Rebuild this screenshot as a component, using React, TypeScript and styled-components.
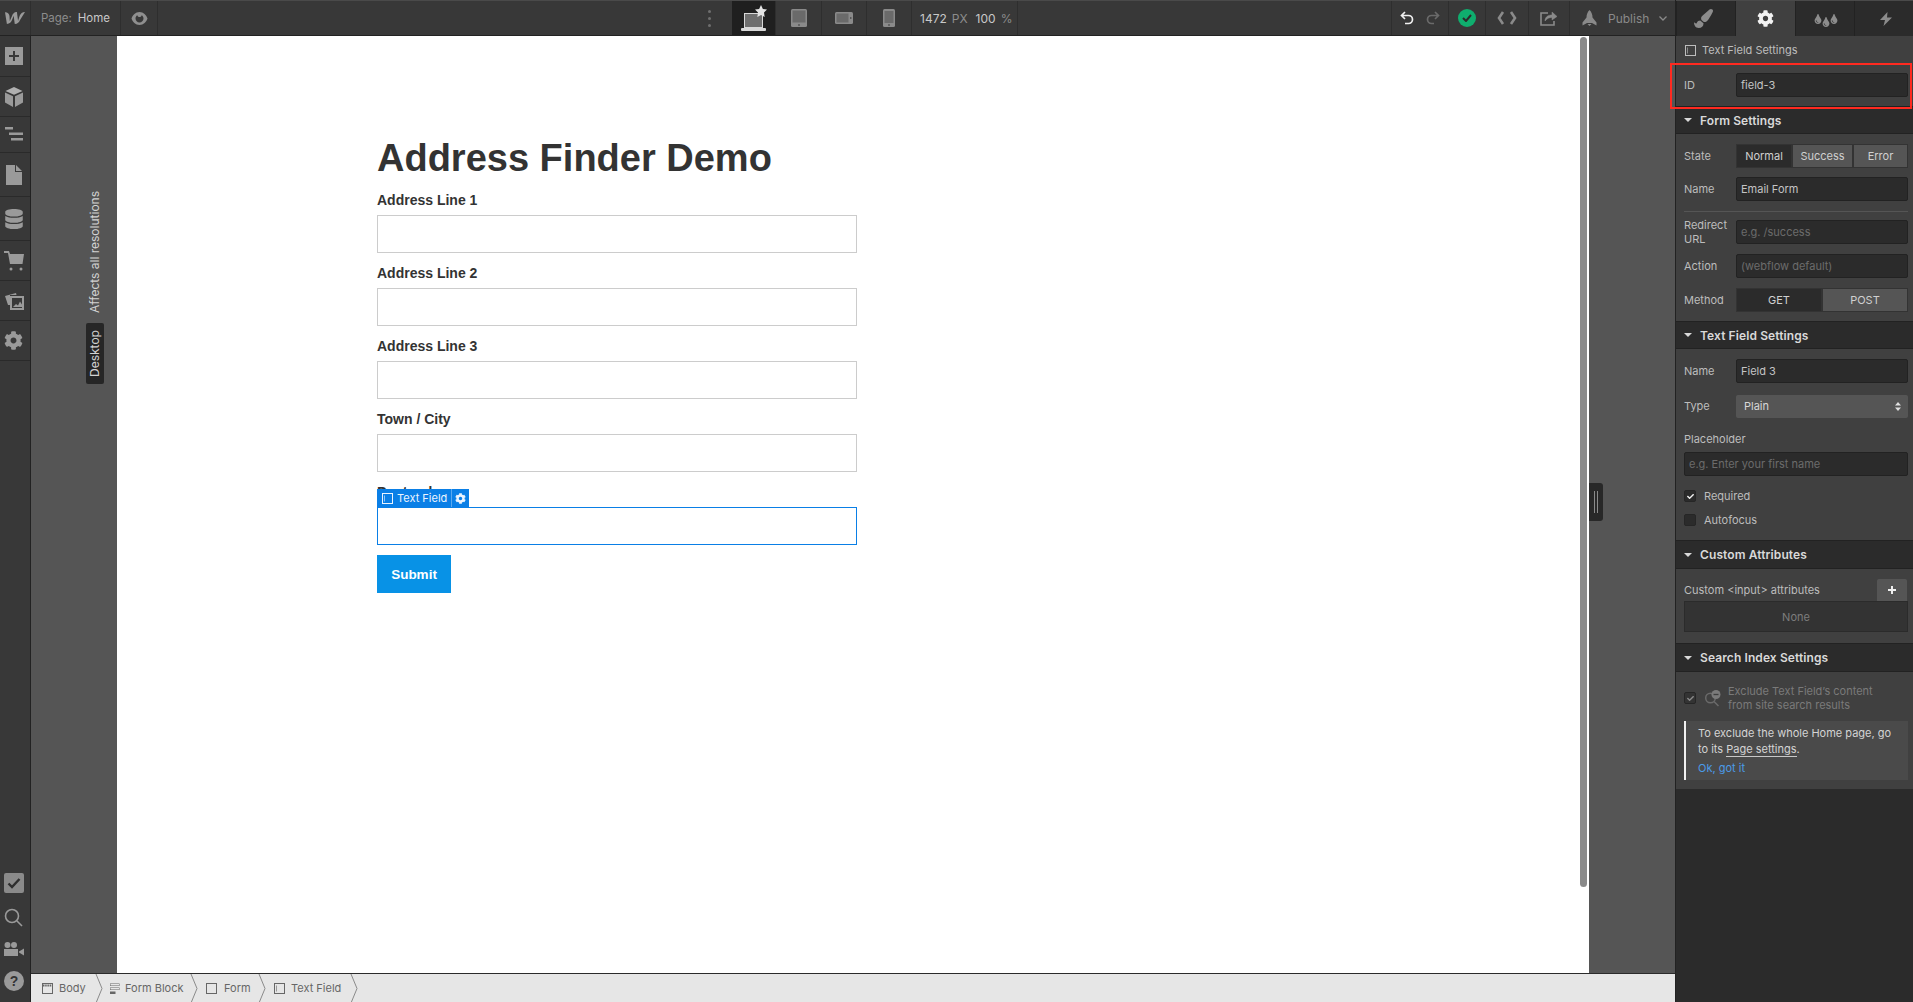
import React from 'react';
import styled, { createGlobalStyle } from 'styled-components';
import { FaCog, FaTint, FaPaintBrush, FaDatabase, FaCheck } from 'react-icons/fa';

const GlobalStyle = createGlobalStyle`
  html, body { margin: 0; padding: 0; height: 100%; overflow: hidden; background: #555; }
  * { box-sizing: border-box; }
  #root { height: 100%; }
`;

const FIELDS = ['Address Line 1', 'Address Line 2', 'Address Line 3', 'Town / City'];

const FieldBoxIcon = () => (
  <svg width="11" height="11" viewBox="0 0 11 11" fill="none" stroke="currentColor">
    <rect x="0.5" y="0.5" width="10" height="10" />
    <path d="M2.5 2.5v6" opacity="0.6" />
  </svg>
);

const BoxIcon = () => (
  <svg width="11" height="11" viewBox="0 0 11 11" fill="none" stroke="currentColor">
    <rect x="0.5" y="0.5" width="10" height="10" />
  </svg>
);

const BodyIcon = () => (
  <svg width="11" height="11" viewBox="0 0 11 11" fill="none" stroke="currentColor">
    <rect x="0.5" y="0.5" width="10" height="10" />
    <path d="M1 2.5h9" strokeWidth="2" strokeDasharray="1.5 0.7" />
  </svg>
);

const BlockIcon = () => (
  <svg width="11" height="11" viewBox="0 0 11 11" fill="currentColor">
    <path d="M1 .5h9.5v2.5H1zM1.5 1v1.5h8.5V1z" fillRule="evenodd" />
    <path d="M1 4.5h9.5V7H1zM1.5 5v1.5h8.5V5z" fillRule="evenodd" />
    <path d="M1 8.5h5.5V11H1z" />
  </svg>
);

const CrumbArrow = () => (
  <svg width="8" height="29" viewBox="0 0 8 29" fill="none" stroke="#8a8a8a">
    <path d="M1 0l6 14.5L1 29" />
  </svg>
);

export default function App() {
  return (
    <Page>
      <GlobalStyle />
      <Designer>
        <TopBar>
          <LogoCell>
            <svg width="20" height="13" viewBox="0 0 20 13" fill="#9a9a9a">
              <path d="M14.8 3.6s-1.6 5-1.7 5.3c0-.4-1.2-9-1.2-9C9.2-.1 7.8 1.8 7 3.9L4.800 9c0-.3-.3-5-.3-5C4.300 1.300 2 0 0 .2l1.900 11.800c2.800 0 4.300-1.900 5.100-3.900l1.700-4.300c0 .2 1.100 8.200 1.100 8.200 2.800 0 4.300-1.800 5.100-3.700L20 0c-2.800 0-4.300 1.600-5.200 3.600z" />
            </svg>
          </LogoCell>
          <PageCell>
            <Dim>Page:</Dim>
            <Bright>Home</Bright>
          </PageCell>
          <EyeCell>
            <svg width="17" height="15" viewBox="0 0 17 15" fill="#8f8f8f">
              <path d="M8.500 1C4.500 1 1.600 4 .5 7.500 1.600 11 4.500 14 8.500 14s6.900-3 8-6.500C15.400 4 12.500 1 8.500 1zm0 10.500c-2.200 0-4-1.800-4-4 0-1.400.7-2.600 1.800-3.300.2 1 1.100 1.800 2.200 1.800s2-.8 2.200-1.800c1.100.7 1.800 1.900 1.800 3.300 0 2.200-1.800 4-4 4z" />
            </svg>
          </EyeCell>
          <LeftSpacer />
          <DotsCell>
            <Dot />
            <Dot />
            <Dot />
          </DotsCell>
          <DeviceCell $active>
            <svg width="26" height="26" viewBox="0 0 26 26">
              <rect x="3.500" y="8.500" width="18" height="14" fill="#6e6e6e" stroke="#d8d8d8" />
              <rect x="0" y="23" width="25" height="3" rx="1" fill="#d8d8d8" />
              <path d="M20 0l1.900 4 4.100.6-3 3 .7 4.400-3.700-2.100-3.700 2.100.7-4.400-3-3 4.100-.6z" fill="#e4e4e4" />
            </svg>
          </DeviceCell>
          <DeviceCell $w={46}>
            <svg width="16" height="18" viewBox="0 0 16 18">
              <rect width="16" height="18" rx="1.500" fill="#8a8a8a" />
              <rect x="1.500" y="1.500" width="13" height="12" fill="#6a6a6a" />
              <circle cx="8" cy="16" r="0.800" fill="#333" />
            </svg>
          </DeviceCell>
          <DeviceCell $w={45}>
            <svg width="18" height="12" viewBox="0 0 18 12">
              <rect width="18" height="12" rx="1.500" fill="#8a8a8a" />
              <rect x="1.500" y="1.500" width="12" height="9" fill="#6a6a6a" />
              <circle cx="15.800" cy="6" r="0.800" fill="#333" />
            </svg>
          </DeviceCell>
          <DeviceCell $w={45}>
            <svg width="12" height="18" viewBox="0 0 12 18">
              <rect width="12" height="18" rx="1.500" fill="#8a8a8a" />
              <rect x="1.500" y="2" width="9" height="12" fill="#6a6a6a" />
              <circle cx="6" cy="16" r="0.800" fill="#333" />
            </svg>
          </DeviceCell>
          <SizeCell>
            <Bright>1472</Bright>
            <Dim>PX</Dim>
            <SpacedNum>100</SpacedNum>
            <Dim>%</Dim>
          </SizeCell>
          <BarSpacer />
          <UndoCell>
            <svg width="14" height="14" viewBox="0 0 14 14" fill="none" stroke="#f0f0f0" strokeWidth="1.700">
              <path d="M5 1L1.500 4.500 5 8M2 4.500h6.500a4 4 0 0 1 0 8H5" />
            </svg>
            <svg width="14" height="14" viewBox="0 0 14 14" fill="none" stroke="#6a6a6a" strokeWidth="1.700">
              <path d="M9 1l3.500 3.500L9 8M12 4.500H5.500a4 4 0 0 0 0 8H8" />
            </svg>
          </UndoCell>
          <ActionCell $w={37}>
            <StatusDot>
              <svg width="10" height="8" viewBox="0 0 10 8" fill="none" stroke="#2b2b2b" strokeWidth="2">
                <path d="M1 4l3 3 5-6" />
              </svg>
            </StatusDot>
          </ActionCell>
          <ActionCell $w={43}>
            <svg width="20" height="14" viewBox="0 0 20 14" fill="none" stroke="#8a8a8a" strokeWidth="2.600">
              <path d="M6 1L2 7l4 6M14 1l4 6-4 6" />
            </svg>
          </ActionCell>
          <ActionCell $w={41}>
            <svg width="18" height="16" viewBox="0 0 18 16" fill="none" stroke="#8a8a8a" strokeWidth="1.600">
              <path d="M8 3H1v12h13v-4" />
              <path d="M5 11c0-4 3-6 7-6V2l5 4.500L12 10V7.500c-3 0-5 1-7 3.500z" fill="#8a8a8a" strokeWidth="0.500" />
            </svg>
          </ActionCell>
          <PublishCell>
            <svg width="17" height="16" viewBox="0 0 17 16" fill="#8a8a8a">
              <path d="M8.500 0c2 2 3 4.500 3 7.500l4 5v3l-4.500-2.500H6L1.500 15.500v-3l4-5C5.500 4.500 6.500 2 8.500 0zM6.500 14h4l-2 2z" />
            </svg>
            <PublishLabel>Publish</PublishLabel>
            <svg width="8" height="5" viewBox="0 0 8 5" fill="none" stroke="#8a8a8a" strokeWidth="1.300">
              <path d="M.5.5L4 4 7.500.5" />
            </svg>
          </PublishCell>
        </TopBar>
        <Workspace>
          <Rail>
            <RailItem $h={41}>
              <svg width="18" height="18" viewBox="0 0 18 18">
                <path d="M0 0h18v18H0z M8 4v4H4v2h4v4h2v-4h4V8h-4V4z" fill="#9a9a9a" fillRule="evenodd" />
              </svg>
            </RailItem>
            <RailItem $h={40}>
              <svg width="18" height="20" viewBox="0 0 18 20" fill="#9a9a9a">
                <path d="M9 0l8.500 4L9 7.800.5 4z" fill="#b0b0b0" />
                <path d="M0 5.500l8 3.700V20l-8-4.500zM18 5.500l-8 3.700V20l8-4.500z" />
              </svg>
            </RailItem>
            <RailItem $h={36}>
              <svg width="18" height="16" viewBox="0 0 18 16" fill="#9a9a9a">
                <path d="M0 0h8v2.500H0zM4 5.500h14V8H4zM6 11h12v2.500H6z" />
              </svg>
            </RailItem>
            <RailItem $h={44}>
              <svg width="16" height="20" viewBox="0 0 16 20" fill="#9a9a9a">
                <path d="M0 0h9v7h7v13H0zM10 0l6 6h-6z" />
              </svg>
            </RailItem>
            <RailItem $h={44}>
              <FaDatabase size={20} color="#9a9a9a" />
            </RailItem>
            <RailItem $h={40}>
              <svg width="20" height="20" viewBox="0 0 20 20" fill="#9a9a9a">
                <path d="M0 0h5l1 3h14l-1.500 10H6L4 2H0z" />
                <circle cx="7" cy="18" r="1.500" />
                <circle cx="17" cy="18" r="1.500" />
              </svg>
            </RailItem>
            <RailItem $h={40}>
              <svg width="20" height="19" viewBox="0 0 20 19" fill="none">
                <path d="M1 5l11-3 .5 2H6v10H4z" fill="#9a9a9a" />
                <rect x="7" y="6" width="12" height="12" stroke="#9a9a9a" strokeWidth="2" />
                <path d="M9 16l3-3 2 1.500 2-4 2 3V16z" fill="#9a9a9a" />
              </svg>
            </RailItem>
            <RailItem $h={40}>
              <FaCog size={19} color="#9a9a9a" />
            </RailItem>
            <RailSpacer />
            <RailFoot>
              <svg width="20" height="20" viewBox="0 0 20 20">
                <rect width="20" height="20" rx="2" fill="#8a8a8a" />
                <path d="M4.500 10.500L8 14l7.500-8" fill="none" stroke="#2e2e2e" strokeWidth="2.400" />
              </svg>
              <svg width="19" height="19" viewBox="0 0 19 19" fill="none" stroke="#9a9a9a" strokeWidth="1.600">
                <circle cx="8" cy="8" r="6.500" />
                <path d="M13 13l5 5" />
              </svg>
              <svg width="21" height="14" viewBox="0 0 21 14" fill="#9a9a9a">
                <circle cx="4.500" cy="3" r="3" />
                <circle cx="11" cy="3" r="3" />
                <path d="M1 7h14v7H1zM16 9.500l5-3v7l-5-3z" />
              </svg>
              <svg width="20" height="20" viewBox="0 0 20 20">
                <circle cx="10" cy="10" r="10" fill="#9a9a9a" />
                <HelpMark x="10" y="15">?</HelpMark>
              </svg>
            </RailFoot>
          </Rail>
          <Center>
            <CanvasRow>
              <Gutter>
                <SideNote>Affects all resolutions</SideNote>
                <SideTag>Desktop</SideTag>
              </Gutter>
              <Viewport>
                <Title>Address Finder Demo</Title>
                {FIELDS.map(label => (
                  <div key={label}>
                    <FieldLabel>{label}</FieldLabel>
                    <TextInput />
                  </div>
                ))}
                <SelectedField>
                  <FieldLabel>Postcode</FieldLabel>
                  <TextInput $selected />
                  <SelectionTag>
                    <FieldBoxIcon />
                    <SelectionName>Text Field</SelectionName>
                    <SelectionGear>
                      <FaCog size={11} />
                    </SelectionGear>
                  </SelectionTag>
                </SelectedField>
                <SubmitButton>Submit</SubmitButton>
                <ScrollThumb />
              </Viewport>
              <RightGutter>
                <ResizeHandle>
                  <GripLine />
                  <GripLine />
                </ResizeHandle>
              </RightGutter>
            </CanvasRow>
            <Breadcrumbs>
              <Crumb $w={64} $pad={11} $gap={6}>
                <BodyIcon />
                <span>Body</span>
              </Crumb>
              <CrumbArrow />
              <Crumb $w={87} $pad={6} $gap={5}>
                <BlockIcon />
                <span>Form Block</span>
              </Crumb>
              <CrumbArrow />
              <Crumb $w={60} $pad={8} $gap={7}>
                <BoxIcon />
                <span>Form</span>
              </Crumb>
              <CrumbArrow />
              <Crumb $w={84} $pad={8} $gap={6}>
                <FieldBoxIcon />
                <span>Text Field</span>
              </Crumb>
              <CrumbArrow />
            </Breadcrumbs>
          </Center>
        </Workspace>
      </Designer>
      <Panel>
        <Tabs>
          <Tab $pr={5}>
            <FaPaintBrush size={19} color="#8c8c8c" />
          </Tab>
          <Tab $active>
            <FaCog size={17} color="#f2f2f2" />
          </Tab>
          <Tab>
            <DropGroup>
              <FaTint size={10} color="#8c8c8c" />
              <FaTint size={10} color="#8c8c8c" />
              <FaTint size={10} color="#8c8c8c" />
            </DropGroup>
          </Tab>
          <Tab $pl={4}>
            <svg width="12" height="14" viewBox="0 0 12 14" fill="#8c8c8c">
              <path d="M7.500 0L0 8h5l-1.500 6L12 5.500H7z" />
            </svg>
          </Tab>
        </Tabs>
        <ElementRow>
          <FieldBoxIcon />
          <span>Text Field Settings</span>
        </ElementRow>
        <IdRow>
          <RowLabel>ID</RowLabel>
          <PanelInput>field-3</PanelInput>
          <RedBox />
        </IdRow>

        <SectionHeader $h={28}>
          <Caret />
          Form Settings
        </SectionHeader>
        <SectionBody $top={10} $h={187}>
          <FormRow $mb={9}>
            <RowLabel>State</RowLabel>
            <Segments>
              <Segment $on $w={56}>Normal</Segment>
              <Segment $w={61}>Success</Segment>
              <Segment $w={55}>Error</Segment>
            </Segments>
          </FormRow>
          <FormRow $mb={0}>
            <RowLabel>Name</RowLabel>
            <PanelInput>Email Form</PanelInput>
          </FormRow>
          <Divider />
          <FormRow $mb={10}>
            <RowLabel>Redirect URL</RowLabel>
            <PanelInput $muted>e.g. /success</PanelInput>
          </FormRow>
          <FormRow $mb={10}>
            <RowLabel>Action</RowLabel>
            <PanelInput $muted>(webflow default)</PanelInput>
          </FormRow>
          <FormRow $mb={0}>
            <RowLabel>Method</RowLabel>
            <Segments>
              <Segment $on $w={86}>GET</Segment>
              <Segment $w={86}>POST</Segment>
            </Segments>
          </FormRow>
        </SectionBody>

        <SectionHeader $h={28}>
          <Caret />
          Text Field Settings
        </SectionHeader>
        <SectionBody $top={10} $h={191}>
          <FormRow $mb={11}>
            <RowLabel>Name</RowLabel>
            <PanelInput>Field 3</PanelInput>
          </FormRow>
          <FormRow $mb={0}>
            <RowLabel>Type</RowLabel>
            <SelectBox>
              <span>Plain</span>
              <svg width="6" height="9" viewBox="0 0 6 9" fill="#e0e0e0">
                <path d="M3 0l3 3.500H0zM3 9L0 5.500h6z" />
              </svg>
            </SelectBox>
          </FormRow>
          <StackLabel>Placeholder</StackLabel>
          <StackInput $muted>e.g. Enter your first name</StackInput>
          <CheckRow $mt={12}>
            <CheckBox>
              <FaCheck size={7} color="#f0f0f0" />
            </CheckBox>
            Required
          </CheckRow>
          <CheckRow $mt={8}>
            <CheckBox />
            Autofocus
          </CheckRow>
        </SectionBody>

        <SectionHeader $h={29}>
          <Caret />
          Custom Attributes
        </SectionHeader>
        <SectionBody $top={10} $h={74}>
          <AttrHead>
            <span>Custom &lt;input&gt; attributes</span>
            <PlusButton>
              <svg width="8" height="8" viewBox="0 0 8 8" fill="#efefef">
                <path d="M3 0h2v3h3v2H5v3H3V5H0V3h3z" />
              </svg>
            </PlusButton>
          </AttrHead>
          <EmptyBox>None</EmptyBox>
        </SectionBody>

        <SectionHeader $h={29}>
          <Caret />
          Search Index Settings
        </SectionHeader>
        <SectionBody $top={12} $h={117}>
          <ExcludeRow>
            <CheckBox $dim>
              <FaCheck size={7} color="#8a8a8a" />
            </CheckBox>
            <svg width="17" height="17" viewBox="0 0 17 17" fill="none" stroke="#6a6a6a" strokeWidth="1.500">
              <circle cx="6.500" cy="8" r="4.800" />
              <path d="M10 11.500l4.500 4.500" />
              <circle cx="12" cy="4.500" r="4.500" fill="#7a7a7a" stroke="none" />
              <path d="M9.500 4.500h5" stroke="#3e3e3e" strokeWidth="1.300" />
            </svg>
            <ExcludeText>
              Exclude Text Field’s content
              <br />
              from site search results
            </ExcludeText>
          </ExcludeRow>
          <NoteBox>
            <NoteText>
              To exclude the whole Home page, go to its <NoteLink>Page settings</NoteLink>.
            </NoteText>
            <OkLink>Ok, got it</OkLink>
          </NoteBox>
        </SectionBody>
      </Panel>
    </Page>
  );
}

const Page = styled.div`
  display: flex;
  width: 1913px;
  height: 1002px;
  font-family: Inter, 'Liberation Sans', sans-serif;
  font-size: 11px;
  overflow: hidden;
`;

const Designer = styled.div`
  flex: 1;
  min-width: 0;
  display: flex;
  flex-direction: column;
`;

const TopBar = styled.div`
  display: flex;
  flex: none;
  height: 36px;
  background: #383838;
  border-top: 1px solid #4a4a4a;
  border-bottom: 1px solid #222;
`;

const BarCell = styled.div`
  display: flex;
  align-items: center;
  justify-content: center;
  flex: none;
  height: 100%;
  border-right: 1px solid #2e2e2e;
`;

const LogoCell = styled(BarCell)`
  width: 31px;
`;

const PageCell = styled(BarCell)`
  width: 90px;
  gap: 6px;
  font-size: 11.5px;
`;

const EyeCell = styled(BarCell)`
  width: 37px;
`;

const LeftSpacer = styled.div`
  flex: none;
  width: 528px;
`;

const BarSpacer = styled.div`
  flex: 1;
`;

const Dim = styled.span`
  color: #8c8c8c;
`;

const Bright = styled.span`
  color: #c8c8c8;
`;

const SpacedNum = styled(Bright)`
  margin-left: 3px;
`;

const DotsCell = styled.div`
  display: flex;
  flex-direction: column;
  align-items: center;
  justify-content: center;
  gap: 4px;
  width: 46px;
`;

const Dot = styled.i`
  width: 3px;
  height: 3px;
  border-radius: 50%;
  background: #6f6f6f;
`;

const DeviceCell = styled(BarCell)<{ $active?: boolean; $w?: number }>`
  width: ${p => p.$w ?? 44}px;
  background: ${p => (p.$active ? '#1f1f1f' : 'transparent')};
`;

const SizeCell = styled(BarCell)`
  justify-content: flex-start;
  width: 106px;
  padding-left: 8px;
  gap: 5px;
  font-size: 12px;
`;

const UndoCell = styled(BarCell)`
  width: 58px;
  gap: 12px;
  border-left: 1px solid #2e2e2e;
`;

const ActionCell = styled(BarCell)<{ $w: number }>`
  width: ${p => p.$w}px;
`;

const StatusDot = styled.div`
  display: flex;
  align-items: center;
  justify-content: center;
  width: 18px;
  height: 18px;
  border-radius: 50%;
  background: #0fae6e;
`;

const PublishCell = styled(BarCell)`
  width: 105px;
  gap: 10px;
  border-right: 0;
  justify-content: flex-start;
  padding-left: 11px;
`;

const PublishLabel = styled.span`
  color: #8a8a8a;
  font-size: 12px;
`;

const Workspace = styled.div`
  flex: 1;
  min-height: 0;
  display: flex;
`;

const Rail = styled.div`
  display: flex;
  flex-direction: column;
  flex: none;
  width: 31px;
  background: #383838;
  border-right: 1px solid #222;
`;

const RailItem = styled.div<{ $h: number }>`
  display: flex;
  align-items: center;
  justify-content: center;
  height: ${p => p.$h}px;
  padding-right: 3px;
  border-bottom: 1px solid #2a2a2a;
`;

const RailSpacer = styled.div`
  flex: 1;
`;

const RailFoot = styled.div`
  display: flex;
  flex-direction: column;
  align-items: center;
  gap: 15px;
  padding: 0 3px 11px 0;
`;

const HelpMark = styled.text`
  font-family: 'Liberation Sans', sans-serif;
  font-weight: 700;
  font-size: 14px;
  text-anchor: middle;
  fill: #333;
`;

const Center = styled.div`
  flex: 1;
  min-width: 0;
  display: flex;
  flex-direction: column;
`;

const CanvasRow = styled.div`
  flex: 1;
  min-height: 0;
  display: flex;
  background: #555;
`;

const Gutter = styled.div`
  display: flex;
  flex-direction: column;
  align-items: flex-end;
  flex: none;
  width: 86px;
  padding: 155px 13px 0 0;
`;

const SideNote = styled.div`
  writing-mode: vertical-rl;
  transform: rotate(180deg);
  width: 18px;
  padding-left: 1px;
  color: #d2d2d2;
  font-size: 12px;
  line-height: 17px;
  white-space: nowrap;
`;

const SideTag = styled(SideNote)`
  margin-top: 10px;
  height: 61px;
  background: #262626;
  border-radius: 2px;
  text-align: center;
`;

const Viewport = styled.div`
  position: relative;
  flex: none;
  width: 1472px;
  padding: 100px 0 0 260px;
  background: #fff;
  color: #333;
  font-family: 'Liberation Sans', Arial, sans-serif;
`;

const Title = styled.h1`
  margin: 0 0 10px;
  font-size: 38px;
  line-height: 44px;
  font-weight: 700;
`;

const FieldLabel = styled.label`
  display: block;
  margin-bottom: 5px;
  font-size: 14px;
  line-height: 20px;
  font-weight: 700;
`;

const TextInput = styled.div<{ $selected?: boolean }>`
  width: 480px;
  height: 38px;
  margin-bottom: 10px;
  background: #fff;
  border: 1px solid ${p => (p.$selected ? '#0a7fe6' : '#ccc')};
`;

const SelectedField = styled.div`
  position: relative;
  width: 480px;
`;

const SelectionTag = styled.div`
  position: absolute;
  left: 0;
  top: 7px;
  display: flex;
  align-items: center;
  width: 92px;
  height: 18px;
  padding-left: 5px;
  background: #0a7fe6;
  color: #eaf4ff;
  font-family: Inter, sans-serif;
  font-size: 11px;
`;

const SelectionName = styled.span`
  margin-left: 4px;
  white-space: nowrap;
`;

const SelectionGear = styled.span`
  display: flex;
  align-items: center;
  justify-content: center;
  position: absolute;
  right: 0;
  top: 0;
  width: 18px;
  height: 18px;
  border-left: 1px solid #5aa9f0;
`;

const SubmitButton = styled.div`
  display: flex;
  align-items: center;
  justify-content: center;
  width: 74px;
  height: 38px;
  background: #0892e6;
  color: #fff;
  font-size: 13.5px;
  font-weight: 700;
`;

const ScrollThumb = styled.div`
  position: absolute;
  top: 1px;
  right: 2px;
  width: 7px;
  height: 850px;
  border-radius: 4px;
  background: #8a8a8a;
`;

const RightGutter = styled.div`
  position: relative;
  flex: 1;
`;

const ResizeHandle = styled.div`
  position: absolute;
  left: 0;
  top: 447px;
  display: flex;
  align-items: center;
  justify-content: center;
  gap: 2px;
  width: 14px;
  height: 38px;
  background: #282828;
  border-radius: 0 3px 3px 0;
`;

const GripLine = styled.i`
  width: 1px;
  height: 22px;
  background: #8a8a8a;
`;

const Breadcrumbs = styled.div`
  display: flex;
  flex: none;
  align-items: center;
  height: 29px;
  background: #e6e6e6;
  border-top: 1px solid #2b2b2b;
`;

const Crumb = styled.div<{ $w: number; $pad: number; $gap: number }>`
  display: flex;
  flex: none;
  align-items: center;
  gap: ${p => p.$gap}px;
  width: ${p => p.$w}px;
  padding-left: ${p => p.$pad}px;
  color: #666;
  font-size: 11px;
  white-space: nowrap;
`;

const Panel = styled.div`
  flex: none;
  width: 238px;
  background: #2b2b2b;
  border-left: 1px solid #222;
  color: #d0d0d0;
`;

const Tabs = styled.div`
  display: flex;
  height: 36px;
  background: #2b2b2b;
  border-top: 1px solid #4a4a4a;
`;

const Tab = styled.div<{ $active?: boolean; $pl?: number; $pr?: number }>`
  display: flex;
  flex: 0 0 25%;
  align-items: center;
  justify-content: center;
  padding: 0 ${p => p.$pr ?? 0}px 0 ${p => p.$pl ?? 0}px;
  background: ${p => (p.$active ? '#404040' : 'transparent')};
  border-left: 1px solid #222;
`;

const DropGroup = styled.div`
  display: grid;
  grid-template-columns: 8px 8px 8px;
  align-items: center;
  svg:nth-child(2) {
    margin-top: 7px;
  }
`;

const ElementRow = styled.div`
  display: flex;
  align-items: center;
  gap: 6px;
  height: 28px;
  padding-left: 9px;
  background: #404040;
  color: #bdbdbd;
`;

const IdRow = styled.div`
  position: relative;
  display: flex;
  align-items: center;
  height: 42px;
  padding: 0 5px 0 8px;
  background: #404040;
`;

const RedBox = styled.div`
  position: absolute;
  left: -6px;
  top: -1px;
  width: 242px;
  height: 46px;
  border: 2px solid #ff2a20;
  pointer-events: none;
`;

const SectionHeader = styled.div<{ $h: number }>`
  display: flex;
  align-items: center;
  gap: 8px;
  height: ${p => p.$h}px;
  padding-left: 8px;
  background: #2b2b2b;
  border-top: 1px solid #222;
  border-bottom: 1px solid #222;
  color: #d9d9d9;
  font-weight: 600;
  font-size: 12px;
  letter-spacing: 0.1px;
`;

const Caret = styled.i`
  width: 0;
  height: 0;
  border-left: 4px solid transparent;
  border-right: 4px solid transparent;
  border-top: 4px solid #d9d9d9;
`;

const SectionBody = styled.div<{ $top: number; $h: number }>`
  height: ${p => p.$h}px;
  padding: ${p => p.$top}px 5px 0 8px;
  background: #404040;
`;

const FormRow = styled.div<{ $mb: number }>`
  display: flex;
  align-items: center;
  height: 24px;
  margin-bottom: ${p => p.$mb}px;
`;

const RowLabel = styled.div`
  flex: none;
  width: 52px;
  padding-right: 10px;
  color: #bdbdbd;
  line-height: 14px;
`;

const PanelInput = styled.div<{ $muted?: boolean }>`
  display: flex;
  flex: 1;
  align-items: center;
  height: 24px;
  padding-left: 4px;
  background: #2b2b2b;
  border: 1px solid #222;
  border-radius: 2px;
  color: ${p => (p.$muted ? '#6b6b6b' : '#c4c4c4')};
`;

const StackInput = styled(PanelInput)`
  flex: none;
`;

const Segments = styled.div`
  display: flex;
  flex: 1;
`;

const Segment = styled.div<{ $on?: boolean; $w: number }>`
  display: flex;
  align-items: center;
  justify-content: center;
  width: ${p => p.$w}px;
  height: 24px;
  background: ${p => (p.$on ? '#2b2b2b' : '#555')};
  border: 1px solid #333;
  color: #d0d0d0;
`;

const Divider = styled.div`
  height: 1px;
  margin: 10px 0 8px;
  background: #555;
`;

const SelectBox = styled.div`
  display: flex;
  flex: 1;
  align-items: center;
  justify-content: space-between;
  height: 23px;
  padding: 0 7px 0 8px;
  background: #555;
  border-radius: 2px;
  color: #d8d8d8;
`;

const StackLabel = styled.div`
  margin: 14px 0 6px;
  color: #bdbdbd;
  line-height: 14px;
`;

const CheckRow = styled.div<{ $mt: number }>`
  display: flex;
  align-items: center;
  gap: 8px;
  margin-top: ${p => p.$mt}px;
  height: 16px;
  color: #bdbdbd;
`;

const CheckBox = styled.div<{ $dim?: boolean }>`
  display: flex;
  flex: none;
  align-items: center;
  justify-content: center;
  width: 12px;
  height: 12px;
  background: ${p => (p.$dim ? '#333' : '#2b2b2b')};
  border: 1px solid #262626;
  border-radius: 2px;
`;

const AttrHead = styled.div`
  display: flex;
  align-items: center;
  justify-content: space-between;
  height: 22px;
  padding-right: 1px;
  color: #bdbdbd;
  line-height: 16px;
`;

const PlusButton = styled.div`
  display: flex;
  align-items: center;
  justify-content: center;
  width: 30px;
  height: 22px;
  background: #555;
  border-radius: 2px 2px 0 0;
`;

const EmptyBox = styled.div`
  display: flex;
  align-items: center;
  justify-content: center;
  height: 31px;
  background: #333;
  border: 1px solid #2b2b2b;
  color: #7d7d7d;
`;

const ExcludeRow = styled.div`
  display: flex;
  align-items: center;
  gap: 8px;
  height: 28px;
`;

const ExcludeText = styled.div`
  margin-left: -1px;
  color: #7a7a7a;
  line-height: 14px;
`;

const NoteBox = styled.div`
  margin-top: 9px;
  height: 59px;
  padding: 4px 8px 0 12px;
  background: #4a4a4a;
  border-left: 2px solid #f0f0f0;
  line-height: 16px;
  color: #d4d4d4;
`;

const NoteText = styled.div``;

const NoteLink = styled.span`
  border-bottom: 1px solid #c8c8c8;
`;

const OkLink = styled.div`
  margin-top: 3px;
  color: #4a9be8;
`;
